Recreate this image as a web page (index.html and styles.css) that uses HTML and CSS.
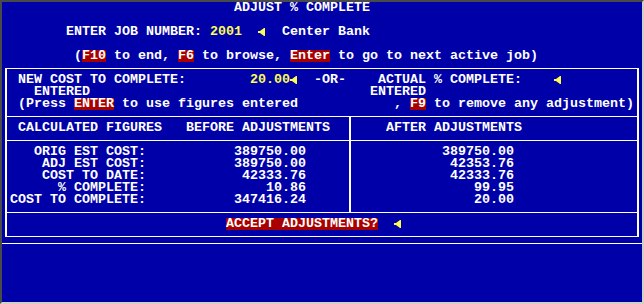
FILE: index.html
```html
<!DOCTYPE html>
<html>
<head>
<meta charset="utf-8">
<title>Adjust % Complete</title>
<link rel="stylesheet" href="styles.css">
</head>
<body>
<div class="frame">
  <div class="screen">
    <div class="row title">ADJUST % COMPLETE</div>
    <div class="row"></div>
    <div class="row">        ENTER JOB NUMBER: <span class="y">2001</span>  <svg class="arrow" viewBox="0 0 8 12"><path d="M0 5h2l4-3h1v8h-1l-4-3h-2z"/></svg>  Center Bank</div>
    <div class="row"></div>
    <div class="row">         (<span class="key">F10</span> to end, <span class="key">F6</span> to browse, <span class="key">Enter</span> to go to next active job)</div>

    <div class="box">
      <div class="row"> NEW COST TO COMPLETE:        <span class="y">20.00</span><svg class="arrow" viewBox="0 0 8 12"><path d="M0 5h2l4-3h1v8h-1l-4-3h-2z"/></svg>  -OR-    ACTUAL % COMPLETE:    <svg class="arrow" viewBox="0 0 8 12"><path d="M0 5h2l4-3h1v8h-1l-4-3h-2z"/></svg></div>
      <div class="row">   ENTERED                                   ENTERED</div>
      <div class="row"> (Press <span class="key">ENTER</span> to use figures entered            , <span class="key">F9</span> to remove any adjustment)</div>

      <div class="split">
        <div class="pane pane-before">
          <div class="pane-head"><div class="row"> CALCULATED FIGURES   BEFORE ADJUSTMENTS</div></div>
          <div class="pane-body">
            <div class="fig"><span class="label">ORIG EST COST:</span><span class="val">389750.00</span></div>
            <div class="fig"><span class="label">ADJ EST COST:</span><span class="val">389750.00</span></div>
            <div class="fig"><span class="label">COST TO DATE:</span><span class="val">42333.76</span></div>
            <div class="fig"><span class="label">% COMPLETE:</span><span class="val">10.86</span></div>
            <div class="fig"><span class="label">COST TO COMPLETE:</span><span class="val">347416.24</span></div>
          </div>
        </div>
        <div class="pane pane-after">
          <div class="pane-head"><div class="row">    AFTER ADJUSTMENTS</div></div>
          <div class="pane-body">
            <div class="fig"><span class="val">389750.00</span></div>
            <div class="fig"><span class="val">42353.76</span></div>
            <div class="fig"><span class="val">42333.76</span></div>
            <div class="fig"><span class="val">99.95</span></div>
            <div class="fig"><span class="val">20.00</span></div>
          </div>
        </div>
      </div>

      <div class="row accept">                           <span class="key">ACCEPT ADJUSTMENTS?</span>  <svg class="arrow" viewBox="0 0 8 12"><path d="M0 5h2l4-3h1v8h-1l-4-3h-2z"/></svg></div>
    </div>

    <div class="rule"></div>
  </div>
</div>
</body>
</html>
```
FILE: styles.css
```css
* {
  box-sizing: border-box;
}

html,
body {
  margin: 0;
  background: #d4d0c8;
}

.frame {
  width: 644px;
  height: 304px;
  border-style: solid;
  border-width: 2px;
  border-color: #4a4a4a #d4d0c8 #d4d0c8 #4a4a4a;
  background: #0000a8;
  overflow: hidden;
}

.screen {
  width: 640px;
  height: 300px;
  font-family: "Liberation Mono", "DejaVu Sans Mono", monospace;
  font-weight: bold;
  font-size: 13.3333px;
  line-height: 12px;
  color: #ffffff;
}

.row {
  height: 12px;
  white-space: pre;
}

.title {
  padding-left: 29ch;
}

.y {
  color: #fcfc54;
}

.key {
  display: inline-block;
  height: 12px;
  line-height: 12px;
  vertical-align: top;
  background: #a80000;
  color: #ffffff;
}

.arrow {
  display: inline-block;
  width: 8px;
  height: 12px;
  vertical-align: top;
  fill: #fcfc54;
}

.box {
  margin: 6px 3px 5px;
  border: 1px solid #ffffff;
  border-left-width: 2px;
  border-right-width: 2px;
  padding: 5px 3px 6px;
}

.split {
  display: flex;
  margin: 6px -3px 0;
  border-top: 1px solid #ffffff;
  border-bottom: 1px solid #ffffff;
}

.pane-before {
  width: 344px;
  border-right: 2px solid #ffffff;
}

.pane-after {
  flex: 1;
}

.pane-head {
  padding: 5px 0 6px 3px;
  border-bottom: 1px solid #ffffff;
}

.pane-body {
  padding: 5px 0 6px 3px;
}

.fig {
  display: flex;
  height: 12px;
  white-space: pre;
}

.label {
  width: 17ch;
  text-align: right;
}

.val {
  width: 20ch;
  text-align: right;
}

.accept {
  margin-top: 5px;
}

.rule {
  margin-top: 6px;
  border-top: 1px solid #ffffff;
}
```
